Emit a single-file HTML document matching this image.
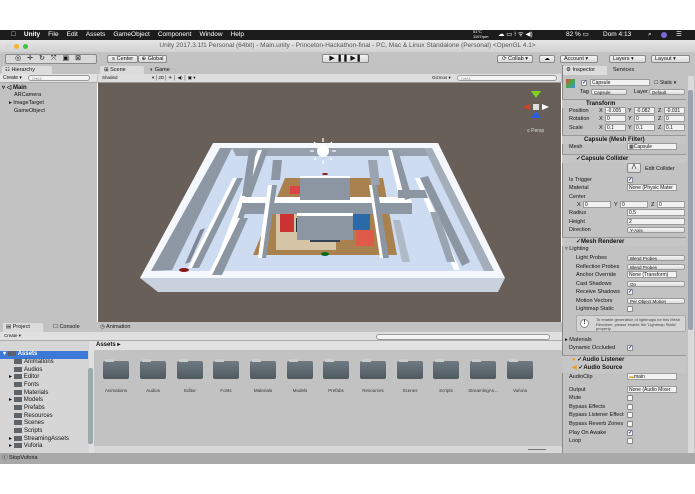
<!DOCTYPE html>
<html><head><meta charset="utf-8"><style>
*{margin:0;padding:0;box-sizing:border-box}
body{width:695px;height:494px;background:#fff;font-family:"Liberation Sans",sans-serif;font-size:6px;color:#111;position:relative;overflow:hidden}
.a{position:absolute;white-space:nowrap}
.btn{position:absolute;background:linear-gradient(#f4f4f4,#d8d8d8);border:1px solid #8a8a8a;border-radius:2px;font-size:5.5px;line-height:7px;text-align:center}
.f{position:absolute;background:#f2f2f2;border:1px solid #9a9a9a;font-size:5px;line-height:6px;padding-left:1px;overflow:hidden}
.dd{position:absolute;background:linear-gradient(#f6f6f6,#dcdcdc);border:1px solid #999;border-radius:2px;font-size:4.5px;line-height:5px;padding-left:2px}
.cb{position:absolute;width:6px;height:6px;background:#f6f6f6;border:1px solid #888;border-radius:1px;font-size:6px;line-height:5px;color:#2a4fa0;text-align:center;font-weight:bold}
.hdr{position:absolute;left:562px;width:124px;height:9px;background:#c6c6c6;border-top:1px solid #999;font-weight:bold;font-size:6px;line-height:8px}
.lbl{position:absolute;font-size:5.5px}
.fold{position:absolute;width:26px;height:18px;background:linear-gradient(#6f7a82,#4f5960);border-radius:2px}
.fold:before{content:"";position:absolute;left:2px;top:-2px;width:9px;height:3px;background:#c8cdd0;border-radius:1px 1px 0 0}
.fl{position:absolute;font-size:4.5px;color:#333;width:40px;text-align:center}
.ti{position:absolute;font-size:6px;line-height:7px}
.fi{display:inline-block;width:8px;height:5px;background:#5b646b;margin-right:2px;vertical-align:-1px}
</style></head><body>
<div class="a" style="left:0;top:30px;width:695px;height:10px;background:#1c1c1c;color:#fff;font-size:6.5px;line-height:10px">
<span style="margin-left:11px">&#63743;</span><b style="margin-left:8px">Unity</b><span style="margin-left:8px">File</span><span style="margin-left:8px">Edit</span><span style="margin-left:8px">Assets</span><span style="margin-left:8px">GameObject</span><span style="margin-left:8px">Component</span><span style="margin-left:8px">Window</span><span style="margin-left:8px">Help</span>
<span class="a" style="left:566px;top:0">82 % ▭</span><span class="a" style="left:603px;top:0">Dom 4:13</span><span class="a" style="left:648px;top:0">⌕</span><span class="a" style="left:661px;top:2px;width:6px;height:6px;border-radius:3px;background:#7a6ad8"></span><span class="a" style="left:676px;top:0">☰</span>
<span class="a" style="left:473px;top:-1px;font-size:4px;line-height:5px">51°C<br>1197rpm</span><span class="a" style="left:498px;top:0">☁ ▭ ⍿ ᯤ ◀)</span>
</div>
<div class="a" style="left:0;top:40px;width:695px;height:12px;background:linear-gradient(#e6e6e6,#d2d2d2);color:#555;font-size:6.5px;line-height:12px;text-align:center">Unity 2017.3.1f1 Personal (64bit) - Main.unity - Princeton-Hackathon-final - PC, Mac &amp; Linux Standalone (Personal) &lt;OpenGL 4.1&gt;</div>
<div class="a" style="left:6px;top:44px;width:5px;height:5px;border-radius:3px;background:#d8d8d8"></div>
<div class="a" style="left:14px;top:44px;width:5px;height:5px;border-radius:3px;background:#f5b530"></div>
<div class="a" style="left:23px;top:44px;width:5px;height:5px;border-radius:3px;background:#3ec33e"></div>
<div class="a" style="left:0;top:52px;width:695px;height:13px;background:#c3c3c3"></div>
<div class="btn" style="left:5px;top:54px;width:92px;height:10px;background:#d9d9d9;font-size:7px;line-height:8px;letter-spacing:6px">◎✛↻⤧▣⊠</div>
<div class="btn" style="left:107px;top:55px;width:31px;height:8px">≡ Center</div>
<div class="btn" style="left:138px;top:55px;width:29px;height:8px">⊕ Global</div>
<div class="btn" style="left:322px;top:54px;width:47px;height:9px;font-size:7px;line-height:7px">▶ ❚❚ ▶❚</div>
<div class="btn" style="left:497px;top:55px;width:36px;height:8px">⟳ Collab ▾</div>
<div class="btn" style="left:539px;top:55px;width:16px;height:8px">☁</div>
<div class="btn" style="left:560px;top:55px;width:38px;height:8px;text-align:left;padding-left:3px">Account ▾</div>
<div class="btn" style="left:609px;top:55px;width:37px;height:8px;text-align:left;padding-left:3px">Layers ▾</div>
<div class="btn" style="left:651px;top:55px;width:39px;height:8px;text-align:left;padding-left:3px">Layout ▾</div>
<div class="a" style="left:0;top:65px;width:97px;height:257px;background:#c2c2c2"></div>
<div class="a" style="left:2px;top:66px;width:50px;height:8px;background:#dcdcdc;border-radius:2px 2px 0 0;font-size:5.5px;line-height:8px;padding-left:3px">☷ Hierarchy</div>
<div class="a" style="left:0;top:74px;width:97px;height:9px;background:#e2e2e2;border-bottom:1px solid #aaa"></div>
<div class="a" style="left:3px;top:75px;font-size:5px">Create ▾</div>
<div class="a" style="left:28px;top:75px;width:62px;height:6px;border:1px solid #999;border-radius:3px;background:#f4f4f4;font-size:4px;color:#999;padding-left:3px">Q▾All</div>
<div class="a" style="left:2px;top:84px;font-size:6px;font-weight:bold">▿ ◁ Main</div>
<div class="a" style="left:14px;top:92px;font-size:5.5px">ARCamera</div>
<div class="a" style="left:9px;top:100px;font-size:5.5px">▸ ImageTarget</div>
<div class="a" style="left:14px;top:108px;font-size:5.5px">GameObject</div>
<div class="a" style="left:97px;top:65px;width:465px;height:18px;background:#c2c2c2"></div>
<div class="a" style="left:100px;top:66px;width:44px;height:8px;background:#dcdcdc;border-radius:2px 2px 0 0;font-size:5.5px;line-height:8px;padding-left:4px">⊞ Scene</div>
<div class="a" style="left:150px;top:66px;font-size:5.5px;line-height:8px">◐ Game</div>
<div class="a" style="left:98px;top:74px;width:463px;height:9px;background:#dedede;border-bottom:1px solid #999"></div>
<div class="a" style="left:102px;top:75px;font-size:4.5px">Shaded</div><div class="a" style="left:152px;top:75px;font-size:4.5px">▾ │2D│ ☀ │ ◀) │ ▣ ▾</div>
<div class="a" style="left:432px;top:75px;font-size:4.5px">Gizmos ▾</div>
<div class="a" style="left:457px;top:75px;width:100px;height:6px;border:1px solid #999;border-radius:3px;background:#f4f4f4;font-size:4px;color:#999;padding-left:3px">Q▾All</div>
<svg class="a" style="left:98px;top:83px" width="463" height="239" viewBox="98 83 463 239">
<rect x="98" y="83" width="463" height="239" fill="#675f58"/>
<polygon points="140,278 505,278 498,292 158,292" fill="#c9d1dc"/>
<polygon points="213,143 438,143 505,278 140,278" fill="#f4f7fb"/>
<polygon points="220,148 432,148 494,271 151,271" fill="#cddcf0"/>
<!-- left outer wall inner face -->
<polygon points="220,148 232,148 172,270 151,271" fill="#8e97a4"/>
<!-- top outer wall face -->
<polygon points="232,148 432,148 428,156 236,156" fill="#96a0ad"/>
<!-- right outer face -->
<polygon points="424,148 432,148 494,271 484,271" fill="#a4adba"/>
<!-- carpet -->
<polygon points="285,178 383,178 397,255 253,255" fill="#a8814f"/>
<rect x="276" y="206" width="60" height="44" fill="#d5c4a6"/>
<rect x="280" y="212" width="14" height="20" fill="#c33"/><rect x="296" y="218" width="18" height="14" fill="#234"/><rect x="318" y="208" width="14" height="22" fill="#e7b13c"/><rect x="350" y="212" width="20" height="18" fill="#2a6aa8"/><rect x="356" y="230" width="18" height="16" fill="#e05a4a"/><rect x="290" y="186" width="14" height="8" fill="#d44"/><rect x="330" y="183" width="16" height="10" fill="#3a8"/><rect x="304" y="206" width="40" height="14" fill="#ddd"/><rect x="310" y="232" width="30" height="10" fill="#345"/>
<!-- left long walls -->
<polygon points="233,178 237,178 192,268 188,268" fill="#fff"/><polygon points="237,178 243,178 199,268 192,268" fill="#8c95a2"/>
<polygon points="258,150 262,150 226,250 220,250" fill="#fff"/><polygon points="262,150 268,150 232,250 226,250" fill="#8c95a2"/>
<polygon points="249,150 256,150 250,196 242,196" fill="#8c95a2"/>
<polygon points="240,218 248,218 222,275 212,275" fill="#8c95a2"/><polygon points="236,218 240,218 212,275 208,275" fill="#fff"/>
<polygon points="200,230 205,228 190,262 185,264" fill="#7f8896"/>
<!-- central horizontal wall -->
<polygon points="244,197 410,197 412,203 242,203" fill="#fff"/><polygon points="242,203 412,203 412,214 242,214" fill="#8c95a2"/>
<polygon points="300,178 350,178 350,200 300,200" fill="#8c95a2"/><polygon points="300,176 350,176 350,178 300,178" fill="#fff"/>
<polygon points="297,216 353,216 353,240 297,240" fill="#8c95a2"/><polygon points="297,213 353,213 353,216 297,216" fill="#fff"/>
<polygon points="272,185 277,185 266,258 260,258" fill="#8c95a2"/><polygon points="268,185 272,185 262,258 258,258" fill="#fff"/>
<polygon points="372,185 377,185 389,258 383,258" fill="#8c95a2"/><polygon points="369,185 372,185 383,258 380,258" fill="#fff"/>
<polygon points="273,160 282,160 280,180 271,180" fill="#8c95a2"/>
<polygon points="368,160 377,160 380,185 371,185" fill="#9aa3b0"/>
<!-- right walls -->
<polygon points="388,150 392,150 405,200 400,200" fill="#fff"/><polygon points="392,150 398,150 412,198 405,200" fill="#8c95a2"/>
<polygon points="415,178 420,178 460,270 454,270" fill="#fff"/><polygon points="420,178 428,176 470,262 462,266" fill="#8c95a2"/>
<polygon points="398,190 425,190 428,198 398,198" fill="#8c95a2"/>
<polygon points="430,212 438,212 455,262 447,262" fill="#9aa3b0"/>
<polygon points="393,220 400,220 410,262 402,262" fill="#b0b9c6"/>
<ellipse cx="325" cy="254" rx="4" ry="2" fill="#0a6a22"/><ellipse cx="184" cy="270" rx="5" ry="2" fill="#8a1a1a"/><ellipse cx="325" cy="174" rx="3" ry="1" fill="#8a1a1a"/>
<circle cx="323" cy="151" r="6" fill="#fff"/>
<g stroke="#fff" stroke-width="1.2"><line x1="323" y1="138" x2="323" y2="142"/><line x1="323" y1="160" x2="323" y2="164"/><line x1="310" y1="151" x2="314" y2="151"/><line x1="332" y1="151" x2="336" y2="151"/><line x1="314" y1="142" x2="316" y2="144"/><line x1="330" y1="158" x2="332" y2="160"/><line x1="332" y1="142" x2="330" y2="144"/><line x1="314" y1="160" x2="316" y2="158"/></g>
<polygon points="531,91 541,91 536,98" fill="#7ed321"/><polygon points="523,107 530,104 530,110" fill="#e23c1c"/><polygon points="549,107 542,104 542,110" fill="#fff"/><polygon points="531,118 541,118 536,111" fill="#2a5ee0"/>
<rect x="533" y="104" width="6" height="6" fill="#ddd"/>
<text x="527" y="132" font-size="5" fill="#ddd" font-family="Liberation Sans">≤ Persp</text>
</svg>
<div class="a" style="left:0;top:322px;width:562px;height:131px;background:#c2c2c2"></div>
<div class="a" style="left:3px;top:323px;width:40px;height:9px;background:#dcdcdc;font-size:5.5px;line-height:9px;padding-left:3px">▤ Project</div>
<div class="a" style="left:53px;top:323px;font-size:5.5px;line-height:9px">☐ Console</div>
<div class="a" style="left:100px;top:323px;font-size:5.5px;line-height:9px">◷ Animation</div>
<div class="a" style="left:0;top:332px;width:562px;height:9px;background:#e0e0e0;border-bottom:1px solid #aaa"></div>
<div class="a" style="left:4px;top:333px;font-size:4.5px">Create ▾</div>
<div class="a" style="left:376px;top:334px;width:174px;height:6px;border:1px solid #999;border-radius:3px;background:#f4f4f4"></div>
<div class="a" style="left:0;top:341px;width:90px;height:112px;background:#d6d6d6"></div>
<div class="a" style="left:89px;top:341px;width:5px;height:112px;background:#e0e0e0"></div>
<div class="a" style="left:88px;top:368px;width:5px;height:76px;background:#9aa;border-radius:2px"></div>
<div class="a" style="left:0;top:351px;width:88px;height:8px;background:#3c78d8"></div>
<div class="ti" style="left:3px;top:351px;color:#fff;font-weight:bold">▾ <span class="fi"></span>Assets</div>
<div class="ti" style="left:14px;top:359px"><span class="fi"></span>Animations</div>
<div class="ti" style="left:14px;top:367px"><span class="fi"></span>Audios</div>
<div class="ti" style="left:9px;top:374px">▸ <span class="fi"></span>Editor</div>
<div class="ti" style="left:14px;top:382px"><span class="fi"></span>Fonts</div>
<div class="ti" style="left:14px;top:390px"><span class="fi"></span>Materials</div>
<div class="ti" style="left:9px;top:397px">▸ <span class="fi"></span>Models</div>
<div class="ti" style="left:14px;top:405px"><span class="fi"></span>Prefabs</div>
<div class="ti" style="left:14px;top:413px"><span class="fi"></span>Resources</div>
<div class="ti" style="left:14px;top:420px"><span class="fi"></span>Scenes</div>
<div class="ti" style="left:14px;top:428px"><span class="fi"></span>Scripts</div>
<div class="ti" style="left:9px;top:436px">▸ <span class="fi"></span>StreamingAssets</div>
<div class="ti" style="left:9px;top:443px">▸ <span class="fi"></span>Vuforia</div>
<div class="a" style="left:94px;top:341px;width:468px;height:9px;background:#e2e2e2;font-size:6px;font-weight:bold;line-height:9px;padding-left:2px">Assets ▸</div>
<div class="a" style="left:94px;top:446px;width:468px;height:7px;background:#d8d8d8"></div>
<div class="fold" style="left:103px;top:361px"></div><div class="fl" style="left:96px;top:388px">Animations</div>
<div class="fold" style="left:140px;top:361px"></div><div class="fl" style="left:133px;top:388px">Audios</div>
<div class="fold" style="left:177px;top:361px"></div><div class="fl" style="left:170px;top:388px">Editor</div>
<div class="fold" style="left:213px;top:361px"></div><div class="fl" style="left:206px;top:388px">Fonts</div>
<div class="fold" style="left:250px;top:361px"></div><div class="fl" style="left:243px;top:388px">Materials</div>
<div class="fold" style="left:287px;top:361px"></div><div class="fl" style="left:280px;top:388px">Models</div>
<div class="fold" style="left:323px;top:361px"></div><div class="fl" style="left:316px;top:388px">Prefabs</div>
<div class="fold" style="left:360px;top:361px"></div><div class="fl" style="left:353px;top:388px">Resources</div>
<div class="fold" style="left:397px;top:361px"></div><div class="fl" style="left:390px;top:388px">Scenes</div>
<div class="fold" style="left:433px;top:361px"></div><div class="fl" style="left:426px;top:388px">Scripts</div>
<div class="fold" style="left:470px;top:361px"></div><div class="fl" style="left:463px;top:388px">StreamingAs...</div>
<div class="fold" style="left:507px;top:361px"></div><div class="fl" style="left:500px;top:388px">Vuforia</div>
<div class="a" style="left:528px;top:449px;width:18px;height:1px;background:#777"></div>
<div class="a" style="left:0;top:453px;width:695px;height:11px;background:#a9a9a9;font-size:5.5px;line-height:11px;padding-left:2px">ⓘ StopVuforia</div>
<div class="a" style="left:562px;top:65px;width:133px;height:388px;background:#c2c2c2;border-left:1px solid #888"></div>
<div class="a" style="left:563px;top:66px;width:44px;height:9px;background:#dcdcdc;font-size:5.5px;line-height:9px;padding-left:3px">⚙ Inspector</div>
<div class="a" style="left:613px;top:66px;font-size:5.5px;line-height:9px">Services</div>
<div class="a" style="left:688px;top:76px;width:6px;height:377px;background:#dadada"></div>
<div class="a" style="left:688px;top:90px;width:5px;height:240px;background:#9aa2ad;border-radius:2px"></div>
<div class="a" style="left:566px;top:79px;width:9px;height:9px;background:linear-gradient(135deg,#e44,#4a4,#48e)"></div>
<div class="cb" style="left:581px;top:80px">✓</div>
<div class="f" style="left:590px;top:79px;width:60px;height:7px">Capsule</div>
<div class="a" style="left:654px;top:80px;font-size:5px">☐ Static ▾</div>
<div class="lbl" style="left:580px;top:89px">Tag</div><div class="dd" style="left:591px;top:89px;width:36px;height:6px">Capsule</div>
<div class="lbl" style="left:634px;top:89px">Layer</div><div class="dd" style="left:649px;top:89px;width:36px;height:6px">Default</div>
<div class="hdr" style="top:99px;padding-left:24px">Transform</div>
<div class="lbl" style="left:569px;top:108px">Position</div><div class="lbl" style="left:599px;top:108px">X</div><div class="f" style="left:605px;top:107px;width:21px;height:7px">-0.005</div><div class="lbl" style="left:628px;top:108px">Y</div><div class="f" style="left:634px;top:107px;width:21px;height:7px">-0.082</div><div class="lbl" style="left:658px;top:108px">Z</div><div class="f" style="left:664px;top:107px;width:21px;height:7px">-0.031</div>
<div class="lbl" style="left:569px;top:116px">Rotation</div><div class="lbl" style="left:599px;top:116px">X</div><div class="f" style="left:605px;top:115px;width:21px;height:7px">0</div><div class="lbl" style="left:628px;top:116px">Y</div><div class="f" style="left:634px;top:115px;width:21px;height:7px">0</div><div class="lbl" style="left:658px;top:116px">Z</div><div class="f" style="left:664px;top:115px;width:21px;height:7px">0</div>
<div class="lbl" style="left:569px;top:125px">Scale</div><div class="lbl" style="left:599px;top:125px">X</div><div class="f" style="left:605px;top:124px;width:21px;height:7px">0.1</div><div class="lbl" style="left:628px;top:125px">Y</div><div class="f" style="left:634px;top:124px;width:21px;height:7px">0.1</div><div class="lbl" style="left:658px;top:125px">Z</div><div class="f" style="left:664px;top:124px;width:21px;height:7px">0.1</div>
<div class="hdr" style="top:135px;padding-left:22px">Capsule (Mesh Filter)</div>
<div class="lbl" style="left:569px;top:144px">Mesh</div><div class="f" style="left:627px;top:143px;width:50px;height:7px">▦Capsule</div>
<div class="hdr" style="top:154px;padding-left:14px">✓Capsule Collider</div>
<div class="btn" style="left:627px;top:163px;width:14px;height:10px">⋀</div><div class="lbl" style="left:645px;top:166px">Edit Collider</div>
<div class="lbl" style="left:569px;top:177px">Is Trigger</div><div class="cb" style="left:627px;top:177px">✓</div>
<div class="lbl" style="left:569px;top:185px">Material</div><div class="f" style="left:627px;top:184px;width:50px;height:7px">None (Physic Mater</div>
<div class="lbl" style="left:569px;top:194px">Center</div>
<div class="lbl" style="left:577px;top:202px">X</div><div class="f" style="left:583px;top:201px;width:28px;height:7px">0</div><div class="lbl" style="left:614px;top:202px">Y</div><div class="f" style="left:620px;top:201px;width:28px;height:7px">0</div><div class="lbl" style="left:651px;top:202px">Z</div><div class="f" style="left:657px;top:201px;width:28px;height:7px">0</div>
<div class="lbl" style="left:569px;top:210px">Radius</div><div class="f" style="left:627px;top:209px;width:58px;height:7px">0.5</div>
<div class="lbl" style="left:569px;top:219px">Height</div><div class="f" style="left:627px;top:218px;width:58px;height:7px">2</div>
<div class="lbl" style="left:569px;top:227px">Direction</div><div class="dd" style="left:627px;top:227px;width:58px;height:6px">Y-Axis</div>
<div class="hdr" style="top:237px;padding-left:14px">✓Mesh Renderer</div>
<div class="lbl" style="left:565px;top:246px">▿ Lighting</div>
<div class="lbl" style="left:576px;top:255px">Light Probes</div><div class="dd" style="left:627px;top:255px;width:58px;height:6px">Blend Probes</div>
<div class="lbl" style="left:576px;top:264px">Reflection Probes</div><div class="dd" style="left:627px;top:264px;width:58px;height:6px">Blend Probes</div>
<div class="lbl" style="left:576px;top:272px">Anchor Override</div><div class="f" style="left:627px;top:271px;width:50px;height:7px">None (Transform)</div>
<div class="lbl" style="left:576px;top:281px">Cast Shadows</div><div class="dd" style="left:627px;top:281px;width:58px;height:6px">On</div>
<div class="lbl" style="left:576px;top:289px">Receive Shadows</div><div class="cb" style="left:627px;top:289px">✓</div>
<div class="lbl" style="left:576px;top:298px">Motion Vectors</div><div class="dd" style="left:627px;top:298px;width:58px;height:6px">Per Object Motion</div>
<div class="lbl" style="left:576px;top:306px">Lightmap Static</div><div class="cb" style="left:627px;top:306px"></div>
<div class="a" style="left:576px;top:315px;width:110px;height:17px;background:#d4d4d4;border:1px solid #aaa;border-radius:2px;font-size:4px;line-height:4.5px;padding:2px 0 0 19px;color:#444;white-space:normal">To enable generation of lightmaps for this Mesh Renderer, please enable the 'Lightmap Static' property.</div>
<div class="a" style="left:580px;top:319px;width:9px;height:9px;border-radius:5px;background:#fff;border:1px solid #888;font-size:6px;line-height:7px;text-align:center;font-weight:bold">!</div>
<div class="lbl" style="left:565px;top:337px">▸ Materials</div>
<div class="lbl" style="left:569px;top:345px">Dynamic Occluded</div><div class="cb" style="left:627px;top:345px">✓</div>
<div class="hdr" style="top:355px;padding-left:10px"><span style="color:#e9a020">●</span> ✓Audio Listener</div>
<div class="hdr" style="top:364px;padding-left:10px;border-top:none"><span style="color:#e9a020">◀</span> ✓Audio Source</div>
<div class="lbl" style="left:569px;top:374px">AudioClip</div><div class="f" style="left:627px;top:373px;width:50px;height:7px"><span style="color:#e9a020">▬</span>main</div>
<div class="lbl" style="left:569px;top:387px">Output</div><div class="f" style="left:627px;top:386px;width:50px;height:7px">None (Audio Mixer</div>
<div class="lbl" style="left:569px;top:395px">Mute</div><div class="cb" style="left:627px;top:395px"></div>
<div class="lbl" style="left:569px;top:404px">Bypass Effects</div><div class="cb" style="left:627px;top:404px"></div>
<div class="lbl" style="left:569px;top:412px">Bypass Listener Effect</div><div class="cb" style="left:627px;top:412px"></div>
<div class="lbl" style="left:569px;top:421px">Bypass Reverb Zones</div><div class="cb" style="left:627px;top:421px"></div>
<div class="lbl" style="left:569px;top:430px">Play On Awake</div><div class="cb" style="left:627px;top:430px">✓</div>
<div class="lbl" style="left:569px;top:438px">Loop</div><div class="cb" style="left:627px;top:438px"></div>
</body></html>
